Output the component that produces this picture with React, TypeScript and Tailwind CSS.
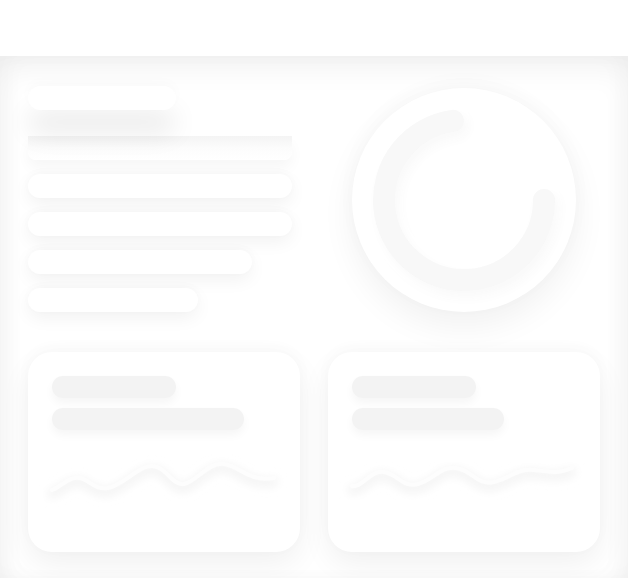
import React from "react";

function Bar({ w }: { w: string }) {
  return (
    <div
      className={`h-6 rounded-full bg-white shadow-[0_6px_18px_rgba(0,0,0,0.055),0_-2px_10px_rgba(0,0,0,0.02)] ${w}`}
    />
  );
}

function Wave({ d, id }: { d: string; id: string }) {
  return (
    <svg width="240" height="40" viewBox="0 0 240 40" className="mt-[30px] -ml-[4px] overflow-visible">
      <defs>
        <filter id={id} x="-10%" y="-50%" width="120%" height="200%">
          <feGaussianBlur stdDeviation="4" />
        </filter>
      </defs>
      <path d={d} fill="none" stroke="#f4f4f4" strokeWidth="9" strokeLinecap="round" filter={`url(#${id})`} transform="translate(0 4)" />
      <path d={d} fill="none" stroke="#fdfdfd" strokeWidth="4" strokeLinecap="round" />
    </svg>
  );
}

function Card({ w2, d, id }: { w2: string; d: string; id: string }) {
  return (
    <div className="h-[200px] rounded-3xl bg-white shadow-[0_12px_30px_rgba(0,0,0,0.06),0_-4px_16px_rgba(0,0,0,0.025)] px-6 pt-6">
      <div className="flex flex-col gap-[10px]">
        <div className="h-[22px] w-[124px] rounded-full bg-[#f3f3f3] shadow-[0_5px_10px_rgba(0,0,0,0.04)]" />
        <div className={`h-[22px] rounded-full bg-[#f3f3f3] shadow-[0_5px_10px_rgba(0,0,0,0.04)] ${w2}`} />
      </div>
      <Wave d={d} id={id} />
    </div>
  );
}

export default function App() {
  const start = { x: 112 + 80 * Math.cos((-98 * Math.PI) / 180), y: 112 + 80 * Math.sin((-98 * Math.PI) / 180) };
  return (
    <div className="w-[628px] h-[578px] bg-white overflow-hidden font-['Liberation_Sans',sans-serif]">
      <header className="relative z-10 h-14 bg-white" />
      <main className="h-[522px] px-7 pt-[30px] shadow-[inset_0_14px_28px_rgba(0,0,0,0.05),inset_10px_0_20px_rgba(0,0,0,0.02),inset_-10px_0_20px_rgba(0,0,0,0.02)]">
        <div className="flex h-[266px]">
          <div className="w-[264px] flex flex-col">
            <div className="relative z-10 h-6 w-[148px] rounded-full bg-white shadow-[0_24px_26px_rgba(0,0,0,0.08),0_-4px_12px_rgba(0,0,0,0.02)]" />
            <div className="mt-[26px] flex flex-col gap-[14px]">
              <div className="h-6 w-[264px] rounded-b-lg bg-gradient-to-b from-[#f4f4f4] via-[#fcfcfc] to-white shadow-[0_8px_14px_rgba(0,0,0,0.035)]" />
              <Bar w="w-[264px]" />
              <Bar w="w-[264px]" />
              <Bar w="w-[224px]" />
              <Bar w="w-[170px]" />
            </div>
          </div>
          <div className="ml-[60px] mt-[2px]">
            <div className="relative h-[224px] w-[224px] rounded-full bg-white shadow-[0_14px_34px_rgba(0,0,0,0.06),0_-6px_20px_rgba(0,0,0,0.025)]">
              <svg width="224" height="224" viewBox="0 0 224 224" className="absolute inset-0 overflow-visible">
                <defs>
                  <filter id="rs" x="-30%" y="-30%" width="160%" height="160%">
                    <feDropShadow dx="3" dy="5" stdDeviation="5" floodColor="#000" floodOpacity="0.05" />
                    <feDropShadow dx="-2" dy="-2" stdDeviation="3" floodColor="#fff" floodOpacity="1" />
                  </filter>
                </defs>
                <path
                  d={`M ${start.x.toFixed(2)} ${start.y.toFixed(2)} A 80 80 0 1 0 192 112`}
                  fill="none"
                  stroke="#f8f8f8"
                  strokeWidth="22"
                  strokeLinecap="round"
                  filter="url(#rs)"
                />
              </svg>
            </div>
          </div>
        </div>
        <div className="grid grid-cols-2 gap-7">
          <Card id="w1" w2="w-[192px]" d="M4 30 C 14 26, 22 16, 32 18 S 46 30, 60 28 S 90 6, 104 6 S 124 26, 136 24 S 160 2, 176 4 S 200 22, 226 18" />
          <Card id="w2" w2="w-[152px]" d="M4 26 C 14 28, 22 10, 36 12 S 54 28, 70 24 S 92 6, 108 8 S 130 26, 146 22 S 170 8, 186 10 S 210 14, 224 8" />
        </div>
      </main>
    </div>
  );
}
